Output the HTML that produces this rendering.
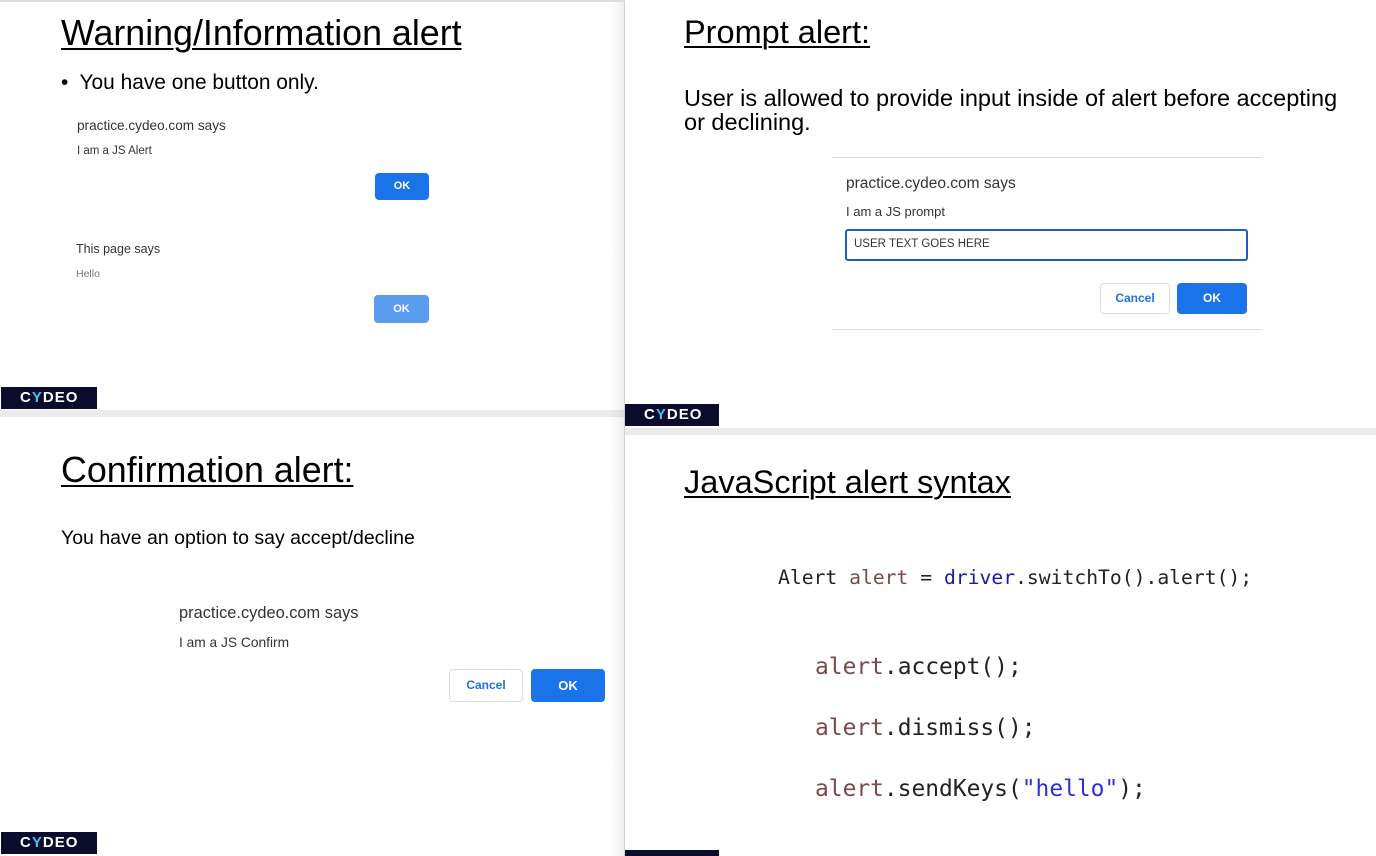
<!DOCTYPE html>
<html><head><meta charset="utf-8"><style>
*{margin:0;padding:0;box-sizing:border-box}
body{width:1376px;height:856px;position:relative;background:#fff;font-family:"Liberation Sans",Arial,sans-serif;color:#000;overflow:hidden}
.a{position:absolute;white-space:nowrap}
.h{text-decoration:underline;text-decoration-thickness:2px;text-underline-offset:3px}
.logo{position:absolute;background:#0b0b2e;color:#fff;font-weight:bold;font-size:15px;letter-spacing:1px;padding-left:19px;line-height:22px}
.logo b{color:#3ec5e8}
.btn{position:absolute;border-radius:4px;color:#fff;font-weight:bold;font-size:11px;text-align:center}
.cb{position:absolute;border:1px solid #dcdcdc;border-radius:4px;color:#1a73e8;font-weight:bold;font-size:12px;text-align:center;background:#fff}
.code{font-family:"DejaVu Sans Mono","Liberation Mono",monospace;font-size:22.9px;color:#222}
.r{color:#7a4a4a}.bl{color:#1a1aa6}.pu{color:#3030d0}
</style></head><body>
<div class="a" style="left:0;top:410px;width:625px;height:7px;background:#ebebeb"></div>
<div class="a" style="left:625px;top:428px;width:751px;height:7px;background:#ebebeb"></div>
<div class="a" style="left:610px;top:0;width:15px;height:856px;background:linear-gradient(to right,rgba(0,0,0,0),rgba(0,0,0,0.07))"></div>
<div class="a" style="left:624px;top:0;width:1px;height:856px;background:#d0d0d0"></div>
<div class="a" style="left:0;top:0;width:625px;height:2px;background:#ddd"></div>

<div class="a h" style="left:61px;top:13px;font-size:35.8px">Warning/Information alert</div>
<div class="a" style="left:61px;top:71px;font-size:20.9px">•&nbsp; You have one button only.</div>
<div class="a" style="left:77px;top:118px;font-size:13.6px;color:#333">practice.cydeo.com says</div>
<div class="a" style="left:77px;top:145px;font-size:11.5px;color:#333">I am a JS Alert</div>
<div class="btn" style="left:375px;top:173px;width:54px;height:27px;line-height:27px;background:#1a73e8">OK</div>
<div class="a" style="left:76px;top:242px;font-size:12.5px;color:#333">This page says</div>
<div class="a" style="left:76px;top:268px;font-size:10.5px;color:#777">Hello</div>
<div class="btn" style="left:374px;top:295px;width:55px;height:28px;line-height:28px;background:#5b9bf0">OK</div>
<div class="logo" style="left:1px;top:387px;width:96px">C<b>Y</b>DEO</div>

<div class="a h" style="left:684px;top:14px;font-size:32.5px">Prompt alert:</div>
<div class="a" style="left:684px;top:86px;font-size:23.5px;line-height:24px">User is allowed to provide input inside of alert before accepting<br>or declining.</div>
<div class="a" style="left:832px;top:157px;width:430px;height:1px;background:#ddd"></div>
<div class="a" style="left:832px;top:329px;width:430px;height:1px;background:#ddd"></div>
<div class="a" style="left:846px;top:175px;font-size:15.5px;color:#333">practice.cydeo.com says</div>
<div class="a" style="left:846px;top:204px;font-size:13px;color:#333">I am a JS prompt</div>
<div class="a" style="left:845px;top:229px;width:403px;height:32px;border:2px solid #1f5fb8;border-radius:3px;font-size:11.5px;color:#333;padding:7px 0 0 7px">USER TEXT GOES HERE</div>
<div class="cb" style="left:1100px;top:283px;width:70px;height:31px;line-height:29px">Cancel</div>
<div class="btn" style="left:1177px;top:283px;width:70px;height:31px;line-height:31px;background:#1a73e8;font-size:12px">OK</div>
<div class="logo" style="left:625px;top:404px;width:94px">C<b>Y</b>DEO</div>

<div class="a h" style="left:61px;top:450px;font-size:35.8px">Confirmation alert:</div>
<div class="a" style="left:61px;top:527px;font-size:19.5px">You have an option to say accept/decline</div>
<div class="a" style="left:179px;top:604px;font-size:16.4px;color:#333">practice.cydeo.com says</div>
<div class="a" style="left:179px;top:635px;font-size:13.75px;color:#333">I am a JS Confirm</div>
<div class="cb" style="left:449px;top:669px;width:74px;height:33px;line-height:31px">Cancel</div>
<div class="btn" style="left:531px;top:669px;width:74px;height:33px;line-height:33px;background:#1a73e8;font-size:13px">OK</div>
<div class="logo" style="left:1px;top:832px;width:96px">C<b>Y</b>DEO</div>

<div class="a h" style="left:684px;top:464px;font-size:32.5px">JavaScript alert syntax</div>
<div class="a code" style="left:778px;top:566px;font-size:19.7px">Alert <span class="r">alert</span> = <span class="bl">driver</span>.switchTo().alert();</div>
<div class="a code" style="left:815px;top:654px"><span class="r">alert</span>.accept();</div>
<div class="a code" style="left:815px;top:715px"><span class="r">alert</span>.dismiss();</div>
<div class="a code" style="left:815px;top:776px"><span class="r">alert</span>.sendKeys(<span class="pu">"hello"</span>);</div>
<div class="logo" style="left:625px;top:850px;width:94px;height:6px"></div>
</body></html>
